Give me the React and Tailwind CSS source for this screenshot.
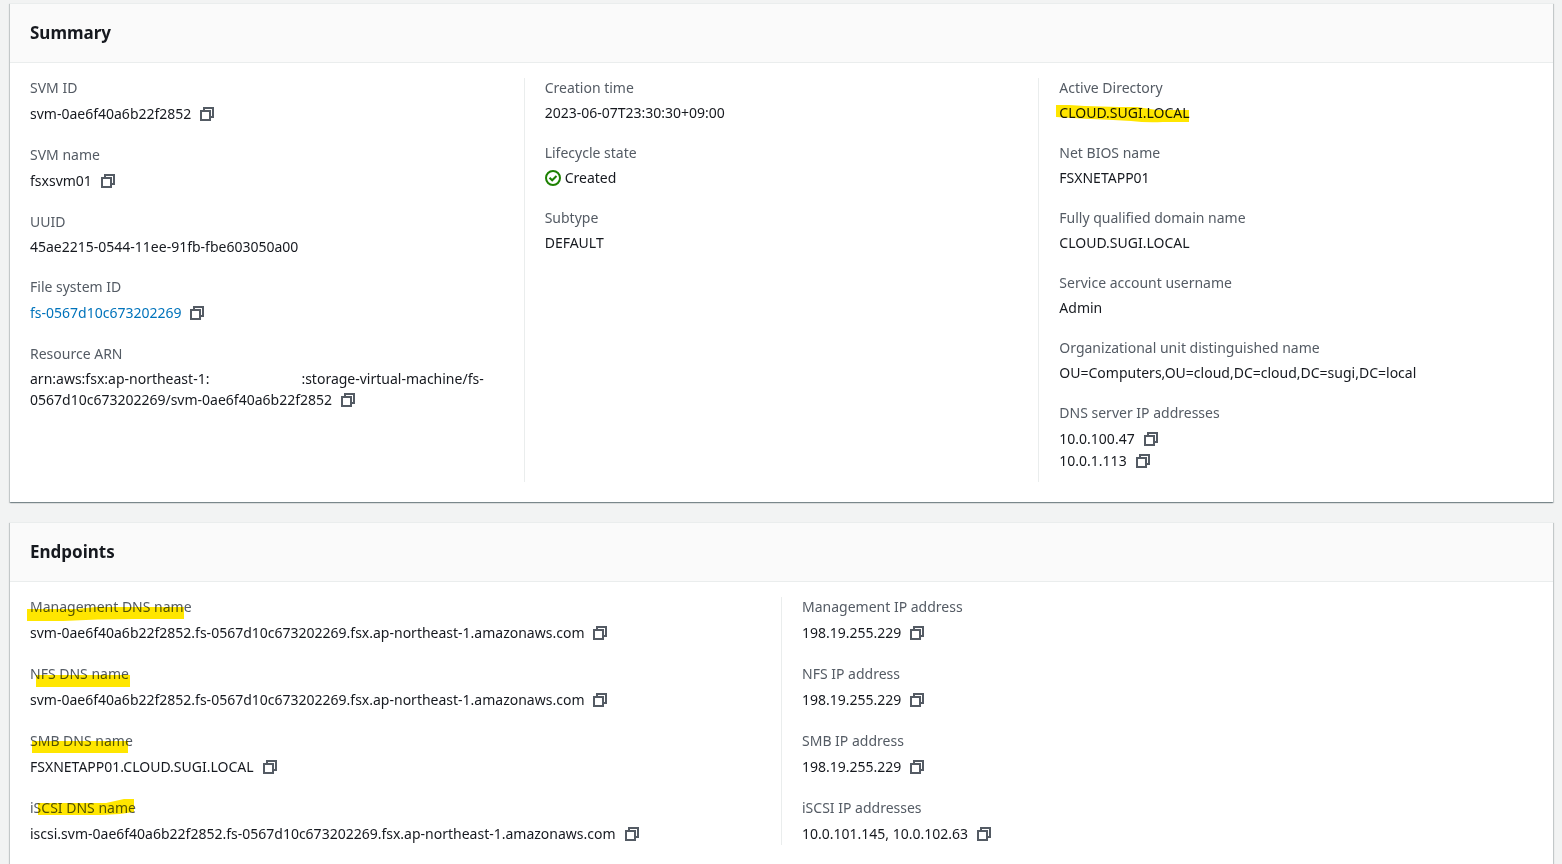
import React from "react";

function CopyButton({ value }) {
  return (
    <button
      type="button"
      aria-label={`Copy ${value}`}
      className="ml-2 inline-flex h-4 w-4 items-center justify-center align-middle text-[#545b64]"
      onClick={() => navigator.clipboard?.writeText(value)}
    >
      <svg width="14" height="14" viewBox="0 0 14 14" fill="none" stroke="currentColor" strokeWidth="2">
        <path d="M1 4h9v9H1z" />
        <path d="M4 4V1h9v9h-3" />
      </svg>
    </button>
  );
}

function Copyable({ children }) {
  return (
    <div className="flex h-[22px] items-center">
      <span>{children}</span>
      <CopyButton value={children} />
    </div>
  );
}

/* Marker stroke laid over a piece of text; the path starts 4px left of the text. */
function Marker({ d }) {
  return (
    <svg
      aria-hidden="true"
      className="pointer-events-none absolute top-0 -left-1 h-6 w-44 mix-blend-multiply"
      viewBox="0 0 176 24"
      fill="#ffe600"
    >
      <path d={d} />
    </svg>
  );
}

function Field({ label, marker, children }) {
  return (
    <div>
      <dt className="relative mb-[5px] text-[#545b64]">
        {label}
        {marker && <Marker d={marker} />}
      </dt>
      <dd>{children}</dd>
    </div>
  );
}

function Column({ children }) {
  return <dl className="flex flex-col gap-5 border-r border-[#eaeded] px-5 last:border-r-0">{children}</dl>;
}

function Panel({ title, className = "", children }) {
  return (
    <section
      className={`border-t border-[#eaeded] bg-white shadow-[0_1px_1px_0_#001c244d,1px_1px_1px_0_#001c2426,-1px_1px_1px_0_#001c2426] ${className}`}
    >
      <header className="border-b border-[#eaeded] bg-[#fafafa] px-5 py-[17px]">
        <h2 className="text-[17px] leading-6 font-bold">{title}</h2>
      </header>
      {children}
    </section>
  );
}

const nodeName = "svm-0ae6f40a6b22f2852.fs-0567d10c673202269.fsx.ap-northeast-1.amazonaws.com";

export default function App() {
  return (
    <main className="flex min-h-screen flex-col gap-5 bg-[#f2f3f3] pt-[3px] pr-[9px] pl-[10px] font-['Noto_Sans',sans-serif] text-sm leading-5 text-[#16191f]">
      <Panel title="Summary">
        <div className="-mr-px grid grid-cols-3 pt-[15px] pb-5">
          <Column>
            <Field label="SVM ID">
              <Copyable>svm-0ae6f40a6b22f2852</Copyable>
            </Field>
            <Field label="SVM name">
              <Copyable>fsxsvm01</Copyable>
            </Field>
            <Field label="UUID">45ae2215-0544-11ee-91fb-fbe603050a00</Field>
            <Field label="File system ID">
              <div className="flex h-[22px] items-center">
                <a href="#file-system" className="text-[#0073bb]">fs-0567d10c673202269</a>
                <CopyButton value="fs-0567d10c673202269" />
              </div>
            </Field>
            <Field label="Resource ARN">
              <div>
                arn:aws:fsx:ap-northeast-1:
                <span className="inline-block w-[92px]" />
                :storage-virtual-machine/fs-
              </div>
              <Copyable>0567d10c673202269/svm-0ae6f40a6b22f2852</Copyable>
            </Field>
          </Column>
          <Column>
            <Field label="Creation time">2023-06-07T23:30:30+09:00</Field>
            <Field label="Lifecycle state">
              <div className="flex items-center gap-1">
                <svg width="16" height="16" viewBox="0 0 16 16" fill="none" stroke="#1d8102" strokeWidth="2">
                  <circle cx="8" cy="8" r="7" />
                  <path d="M4.5 7.7 7.2 10.3 11.5 6" />
                </svg>
                Created
              </div>
            </Field>
            <Field label="Subtype">DEFAULT</Field>
          </Column>
          <Column>
            <Field label="Active Directory">
              <div className="relative">
                CLOUD.SUGI.LOCAL
                <Marker d="M1 2 H14 Q45 4 82 4 L102 7H134V19H108Q92 20 76 18L58 17Q30 16 1 14Z" />
              </div>
            </Field>
            <Field label="Net BIOS name">FSXNETAPP01</Field>
            <Field label="Fully qualified domain name">CLOUD.SUGI.LOCAL</Field>
            <Field label="Service account username">Admin</Field>
            <Field label="Organizational unit distinguished name">
              OU=Computers,OU=cloud,DC=cloud,DC=sugi,DC=local
            </Field>
            <Field label="DNS server IP addresses">
              <div className="pb-[10px]">
                <Copyable>10.0.100.47</Copyable>
                <Copyable>10.0.1.113</Copyable>
              </div>
            </Field>
          </Column>
        </div>
      </Panel>
      <Panel title="Endpoints" className="flex-1">
        <div className="-mr-px grid grid-cols-2 pt-[15px] pb-4">
          <Column>
            <Field
              label="Management DNS name"
              marker="M1 12H50L70 10H158V22H110Q70 22 37 24H1Z"
            >
              <Copyable>{nodeName}</Copyable>
            </Field>
            <Field label="NFS DNS name" marker="M10 11H104V23H10Z">
              <Copyable>{nodeName}</Copyable>
            </Field>
            <Field label="SMB DNS name" marker="M6 10H102V22H6Z">
              <Copyable>FSXNETAPP01.CLOUD.SUGI.LOCAL</Copyable>
            </Field>
            <Field label="iSCSI DNS name" marker="M12 5H80L98 1H108V14Q92 17 76 17H12Z">
              <Copyable>{`iscsi.${nodeName}`}</Copyable>
            </Field>
          </Column>
          <Column>
            <Field label="Management IP address">
              <Copyable>198.19.255.229</Copyable>
            </Field>
            <Field label="NFS IP address">
              <Copyable>198.19.255.229</Copyable>
            </Field>
            <Field label="SMB IP address">
              <Copyable>198.19.255.229</Copyable>
            </Field>
            <Field label="iSCSI IP addresses">
              <Copyable>10.0.101.145, 10.0.102.63</Copyable>
            </Field>
          </Column>
        </div>
      </Panel>
    </main>
  );
}
